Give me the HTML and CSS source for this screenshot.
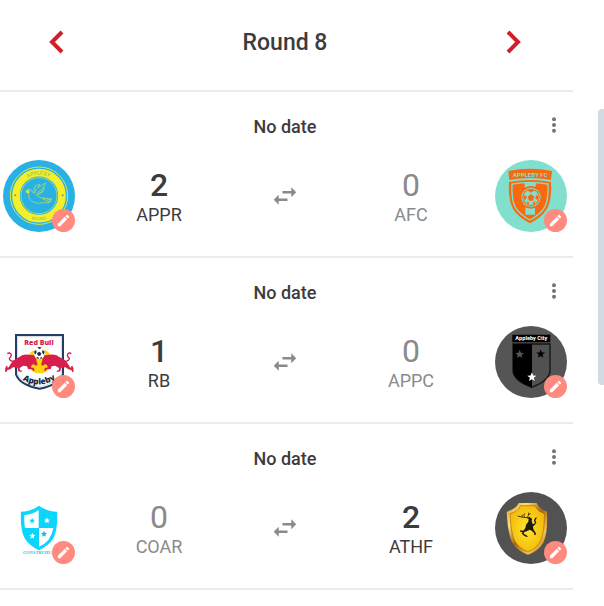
FILE: index.html
```html
<!DOCTYPE html>
<html lang="en">
<head>
<meta charset="utf-8">
<meta name="viewport" content="width=device-width, initial-scale=1">
<title>Round 8</title>
<link rel="stylesheet" href="styles.css">
</head>
<body>
<svg class="defs" aria-hidden="true">
  <symbol id="pencil" viewBox="0 0 24 24"><path d="M3 17.25V21h3.75L17.81 9.94l-3.75-3.75L3 17.25zM20.71 7.04a1 1 0 0 0 0-1.41l-2.34-2.34a1 1 0 0 0-1.41 0l-1.83 1.83 3.75 3.75 1.83-1.83z"/></symbol>
  <symbol id="swap" viewBox="0 0 24 24"><path d="M6.99 11 3 15l3.99 4v-3H14v-2H6.99v-3zM21 9l-3.99-4v3H10v2h7.01v3L21 9z"/></symbol>
  <symbol id="dots" viewBox="0 0 20 20"><circle cx="10" cy="4.3" r="2"/><circle cx="10" cy="10" r="2"/><circle cx="10" cy="15.7" r="2"/></symbol>
  <symbol id="star" viewBox="-10 -10 20 20"><path d="M0-10 2.6-3.4 9.5-3.1 4.1 1.3 5.9 8.1 0 4.3-5.9 8.1-4.1 1.3-9.5-3.1-2.6-3.4z"/></symbol>
</svg>
<main class="page">
  <section class="fixtures">
    <header class="round">
      <button class="round-nav" type="button" aria-label="Previous round"><svg viewBox="0 0 24 28"><path d="m17 4-10 10 10 10"/></svg></button>
      <h1 class="round-title">Round 8</h1>
      <button class="round-nav" type="button" aria-label="Next round"><svg viewBox="0 0 24 28"><path d="m7 4 10 10L7 24"/></svg></button>
    </header>

    <article class="match">
      <div class="match-head">
        <h2 class="match-date">No date</h2>
        <button class="menu" type="button" aria-label="Match options"><svg><use href="#dots"/></svg></button>
      </div>
      <div class="match-body">
        <div class="crest">
          <svg class="crest-art" viewBox="9 30 216 216" role="img" aria-label="APPR crest">
            <circle cx="117" cy="138" r="108" fill="#29b1e6"/>
            <circle cx="117" cy="137" r="86" fill="none" stroke="#d9e74a" stroke-width="3"/>
            <circle cx="117" cy="137" r="69" fill="none" stroke="#f5ee2c" stroke-width="23"/>
            <circle cx="117" cy="137" r="54" fill="none" stroke="#d9e74a" stroke-width="2"/>
            <path id="arc-top" d="M54 137a63 63 0 0 1 126 0" fill="none"/>
            <path id="arc-bottom" d="M43 137a74 74 0 0 0 148 0" fill="none"/>
            <g class="ring-text"><text font-size="16"><textPath href="#arc-top" startOffset="49%">APPLEBY</textPath></text><text font-size="12"><textPath href="#arc-bottom" startOffset="50%">ROVERS</textPath></text></g>
            <circle cx="46" cy="136" r="3" fill="#6b9d68"/><circle cx="188" cy="136" r="3" fill="#6b9d68"/>
            <g fill="none" stroke="#a7d66b" stroke-width="2.6" stroke-linejoin="round" stroke-linecap="round">
              <path d="M77 125q3-8 10-7 8 1 11 9l6 3q2-13 11-19 10-4 22-12-2 9-7 13 4 0 0 6 3 2-3 6 2 4-5 5-6 5-13 6 8 8 19 10l28 2-8 3 6 4-10 1 4 4-16-1q-20 6-36-4-12-9-10-24z"/>
              <path d="M102 127q-2-11 4-19l13-5-4 9M112 128l20-15M113 132l18-10M126 145l18 10M131 143l20 7"/>
            </g><circle cx="84" cy="125" r="5" fill="#d4e443"/>
          </svg>
          <button class="edit" type="button" aria-label="Edit APPR"><svg><use href="#pencil"/></svg></button>
        </div>
        <div class="team winner"><span class="score">2</span><span class="name">APPR</span></div>
        <button class="swap" type="button" aria-label="Swap teams"><svg><use href="#swap"/></svg></button>
        <div class="team"><span class="score">0</span><span class="name">AFC</span></div>
        <div class="crest">
          <svg class="crest-art" viewBox="33 30 216 216" role="img" aria-label="AFC crest">
            <circle cx="141" cy="138" r="108" fill="#82dfce"/>
            <path d="M73 63q65-13 131 0l-3 27q-62-12-125 0z" fill="#f9690e"/>
            <text class="afc-text" x="139" y="81" font-size="18">APPLEBY FC</text>
            <path d="M75 96q64-12 126 0 3 51-11 79-16 27-52 45-36-18-52-45-14-28-11-79z" fill="#f9690e"/>
            <path d="M84 102q54-9 108 0 2 46-9 68-13 24-45 40-32-16-45-40-11-22-9-68z" fill="none" stroke="#82dfce" stroke-width="4"/>
            <path d="M122 97h33v18h-33zM124 172h29v22h-29z" fill="#82dfce"/>
            <circle cx="141" cy="142" r="34" fill="#f9690e"/><circle cx="141" cy="142" r="29" fill="#82dfce"/><circle cx="141" cy="142" r="26" fill="#f9690e"/><circle cx="141" cy="142" r="23" fill="#82dfce"/>
            <path d="m141 132 10 8-4 12h-12l-4-12zM130 121q11-5 22 0l-11 7zM118 139l8-3 2 8-5 7q-5-6-5-12zM164 139l-8-3-2 8 5 7q5-6 5-12zM130 161l-2-7 6 2 2 8zM152 161l2-7-6 2-2 8z" fill="#f9690e"/>
            <text class="afc-year" x="139" y="188" font-size="11">2020</text>
          </svg>
          <button class="edit" type="button" aria-label="Edit AFC"><svg><use href="#pencil"/></svg></button>
        </div>
      </div>
    </article>

    <article class="match">
      <div class="match-head">
        <h2 class="match-date">No date</h2>
        <button class="menu" type="button" aria-label="Match options"><svg><use href="#dots"/></svg></button>
      </div>
      <div class="match-body">
        <div class="crest">
          <svg class="crest-art" viewBox="9 18 216 216" role="img" aria-label="RB crest">
            <path d="M48 45h141v118q-12 32-70 43-60-11-71-43z" fill="#fff" stroke="#243e62" stroke-width="6"/>
            <path d="M53 50h131v110q-14 30-65 40-54-10-66-40z" fill="none" stroke="#a9b6c5" stroke-width="1.5"/>
            <circle cx="119" cy="123" r="37" fill="#fdd20a"/>
            <g id="bull-shape" fill="#d81e4b">
              <path d="M42 124q-14 0-14-9 9-7 4-14-4-4-10 0" fill="none" stroke="#d81e4b" stroke-width="4"/>
              <path d="M39 122q10-6 23-13l4-3q10-4 22-2l12 2 3-4q5 4 3 10 4 6 4 13l3 9-6 3-6-5-6 4-3 6 9 2 3 8-4 1-4-5-12-1-3-8-11-2-11 7 1 7 6 1-1 4-10-2-2-11-14-1-8 6-9 2-3 6-4-1 1-8 10-5 6-10z"/>
              <path d="M19 137l-4 10 5 1 4-8z"/>
            </g>
            <use href="#bull-shape" transform="matrix(-1 0 0 1 236 0)"/>
            <circle cx="118" cy="100" r="17" fill="#fff"/>
            <path d="m118 95 6 5-3 7h-7l-3-7zM112 83q6-4 13 0l-6 4zM102 95l6-5 2 7-5 7zM134 95l-6-5-2 7 5 7zM108 114l6-4 3 7zM128 114l-5-4-3 7z" fill="#182c49"/>
            <text class="rb-name" x="117" y="74" font-size="21">Red Bull</text>
            <path id="rb-arc" d="M58 174q60 40 118-3" fill="none"/>
            <text class="rb-town" font-size="25"><textPath href="#rb-arc" startOffset="50%">Appleby</textPath></text>
          </svg>
          <button class="edit" type="button" aria-label="Edit RB"><svg><use href="#pencil"/></svg></button>
        </div>
        <div class="team winner"><span class="score">1</span><span class="name">RB</span></div>
        <button class="swap" type="button" aria-label="Swap teams"><svg><use href="#swap"/></svg></button>
        <div class="team"><span class="score">0</span><span class="name">APPC</span></div>
        <div class="crest">
          <svg class="crest-art" viewBox="33 18 216 216" role="img" aria-label="APPC crest">
            <circle cx="141" cy="126" r="108" fill="#555"/>
            <path d="M85 44h114v23H85z" fill="#000"/>
            <text class="city-text" x="142" y="61" font-size="17">Appleby City</text>
            <path d="M87 72h111v82q-4 29-55 48-52-19-56-48z" fill="#515151" stroke="#151515" stroke-width="4"/>
            <path d="M87 72h57v130q-53-19-57-48z" fill="#000"/>
            <use href="#star" x="93" y="89" width="28" height="28" fill="#555"/><use href="#star" x="156" y="88" width="28" height="28" fill="#000"/><use href="#star" x="129" y="157" width="29" height="29" fill="#fff"/>
          </svg>
          <button class="edit" type="button" aria-label="Edit APPC"><svg><use href="#pencil"/></svg></button>
        </div>
      </div>
    </article>

    <article class="match">
      <div class="match-head">
        <h2 class="match-date">No date</h2>
        <button class="menu" type="button" aria-label="Match options"><svg><use href="#dots"/></svg></button>
      </div>
      <div class="match-body">
        <div class="crest">
          <svg class="crest-art" viewBox="9 21 216 216" role="img" aria-label="COAR crest">
            <path d="M117 62q24 18 54 18 3 54-11 80-12 21-43 36-31-15-43-36-14-26-11-80 30 0 54-18z" fill="#0bd5fb"/>
            <path d="M116 75v54H75q-3-14-2-39 25-2 43-15zM117 129h43q-7 42-43 56z" fill="#fff"/>
            <use href="#star" x="87" y="98" width="19" height="19" fill="#0bd5fb"/><use href="#star" x="131" y="97" width="20" height="20" fill="#fff"/><use href="#star" x="87" y="143" width="20" height="20" fill="#fff"/><use href="#star" x="122" y="137" width="20" height="20" fill="#0bbfe3"/>
            <text class="coar-text" x="69" y="208" font-size="14">CONSTRUIDA</text>
          </svg>
          <button class="edit" type="button" aria-label="Edit COAR"><svg><use href="#pencil"/></svg></button>
        </div>
        <div class="team"><span class="score">0</span><span class="name">COAR</span></div>
        <button class="swap" type="button" aria-label="Swap teams"><svg><use href="#swap"/></svg></button>
        <div class="team winner"><span class="score">2</span><span class="name">ATHF</span></div>
        <div class="crest">
          <svg class="crest-art" viewBox="33 21 216 216" role="img" aria-label="ATHF crest">
            <defs>
              <linearGradient id="gold-rim" x2="1" y2="1"><stop stop-color="#d8972c"/><stop offset=".25" stop-color="#ffe07b"/><stop offset=".5" stop-color="#a66512"/><stop offset=".75" stop-color="#f6c44c"/><stop offset="1" stop-color="#8f5510"/></linearGradient>
              <radialGradient id="gold-face"><stop stop-color="#ffe62e"/><stop offset="1" stop-color="#f4bd0b"/></radialGradient>
            </defs>
            <circle cx="141" cy="129" r="108" fill="#525252"/>
            <path d="M104 54h54q7 17 31 26 3 64-11 93-14 24-46 36-33-12-47-36-14-29-17-93 29-9 36-26z" fill="url(#gold-rim)"/>
            <path d="M109 62h44q8 18 28 24 1 57-11 81-11 22-38 34-29-12-40-34-12-24-14-81 24-6 31-24z" fill="url(#gold-face)" stroke="#a66c10" stroke-width="2"/>
            <path d="m128 100 9-4 7 5-1 7 3 10 7-3-3-9 4-8 4-1-1 5-3 4 3 7-4 6-6 5 1 8 3 5 5 8-2 6-4-2 1-4-8-8-6-3-7 4-9 3-2 6 8 3 5 6-6-1-8-4-5-6 3-4-8-1 1-4 9 1 6-8 2-10 7-9 1-9-6-2z" fill="#1d1a13"/>
            <path d="M137 98q-20 1-36-5M130 97q5-6 4-14M122 97q-5-5 0-12M115 96l-1-7M134 89l6-3" fill="none" stroke="#28230f" stroke-width="2.5"/>
          </svg>
          <button class="edit" type="button" aria-label="Edit ATHF"><svg><use href="#pencil"/></svg></button>
        </div>
      </div>
    </article>
  </section>
  <div class="scroll-thumb"></div>
</main>
</body>
</html>
```
FILE: styles.css
```css
* {
  box-sizing: border-box;
}

body {
  margin: 0;
  background: #fff;
  color: #3c3c3c;
  font-family: Roboto, "Liberation Sans", sans-serif;
}

button {
  padding: 0;
  border: 0;
  background: none;
  cursor: pointer;
}

svg {
  display: block;
}

.defs {
  position: absolute;
  width: 0;
  height: 0;
}

.page {
  position: relative;
  min-height: 100vh;
  padding-right: 31px;
}

.round,
.match {
  padding-left: 3px;
  padding-right: 6px;
  border-bottom: 2px solid #ebebeb;
}

.round {
  display: flex;
  align-items: center;
  justify-content: space-between;
  padding: 27px 48px 33px 45px;
}

.round-nav svg {
  width: 24px;
  height: 28px;
  fill: none;
  stroke: #d01f2a;
  stroke-width: 4;
}

.round-title {
  margin: 0;
  padding-top: 2px;
  font-size: 23px;
  font-weight: 500;
  line-height: 28px;
}

.match {
  padding-bottom: 24px;
}

.match-head {
  display: grid;
  grid-template-columns: 1fr auto 1fr;
  align-items: start;
  height: 68px;
  padding-top: 23px;
}

.match-date {
  grid-column: 2;
  margin: 0;
  font-size: 18px;
  font-weight: 500;
  line-height: 24px;
}

.menu {
  justify-self: end;
  padding-right: 3px;
}

.menu svg {
  width: 20px;
  height: 20px;
  fill: #757575;
}

.match-body {
  display: grid;
  grid-template-columns: 72px 1fr 84px 1fr 72px;
  align-items: center;
}

.crest {
  position: relative;
}

.crest-art {
  width: 72px;
  height: 72px;
}

.edit {
  position: absolute;
  right: 0;
  bottom: 0;
  display: grid;
  place-items: center;
  width: 23px;
  height: 23px;
  border-radius: 50%;
  background: #ff8a80;
}

.edit svg {
  width: 15px;
  height: 15px;
  fill: #fff;
}

.team {
  display: flex;
  flex-direction: column;
  align-items: center;
  padding-top: 2px;
  color: #8a8a8a;
}

.winner {
  color: #3c3c3c;
}

.score {
  font-size: 32px;
  line-height: 36px;
}

.winner .score {
  font-weight: 500;
}

.name {
  font-size: 18px;
  line-height: 24px;
}

.swap {
  justify-self: center;
}

.swap svg {
  width: 30px;
  height: 30px;
  fill: #8a8a8a;
}

.scroll-thumb {
  position: absolute;
  top: 18%;
  right: 0;
  width: 6px;
  height: 276px;
  border-radius: 4px 0 0 4px;
  background: #d0dbe4;
}

.ring-text,
.afc-text,
.afc-year,
.rb-name,
.rb-town,
.city-text {
  text-anchor: middle;
}

.ring-text {
  fill: #96b94e;
  font-family: Lato, sans-serif;
}

.afc-text,
.afc-year {
  fill: #82dfce;
  font-family: Roboto, sans-serif;
  font-weight: 700;
}

.rb-name {
  fill: #d81e4b;
  font-family: "Open Sans", sans-serif;
  font-weight: 800;
}

.rb-town {
  fill: #182c49;
  font-family: "Open Sans", sans-serif;
  font-weight: 800;
}

.city-text {
  fill: #fff;
  font-family: Roboto, sans-serif;
  font-weight: 700;
}

.coar-text {
  fill: #37bdd8;
  font-family: "Liberation Serif", serif;
  font-style: italic;
  font-weight: 700;
}
```
